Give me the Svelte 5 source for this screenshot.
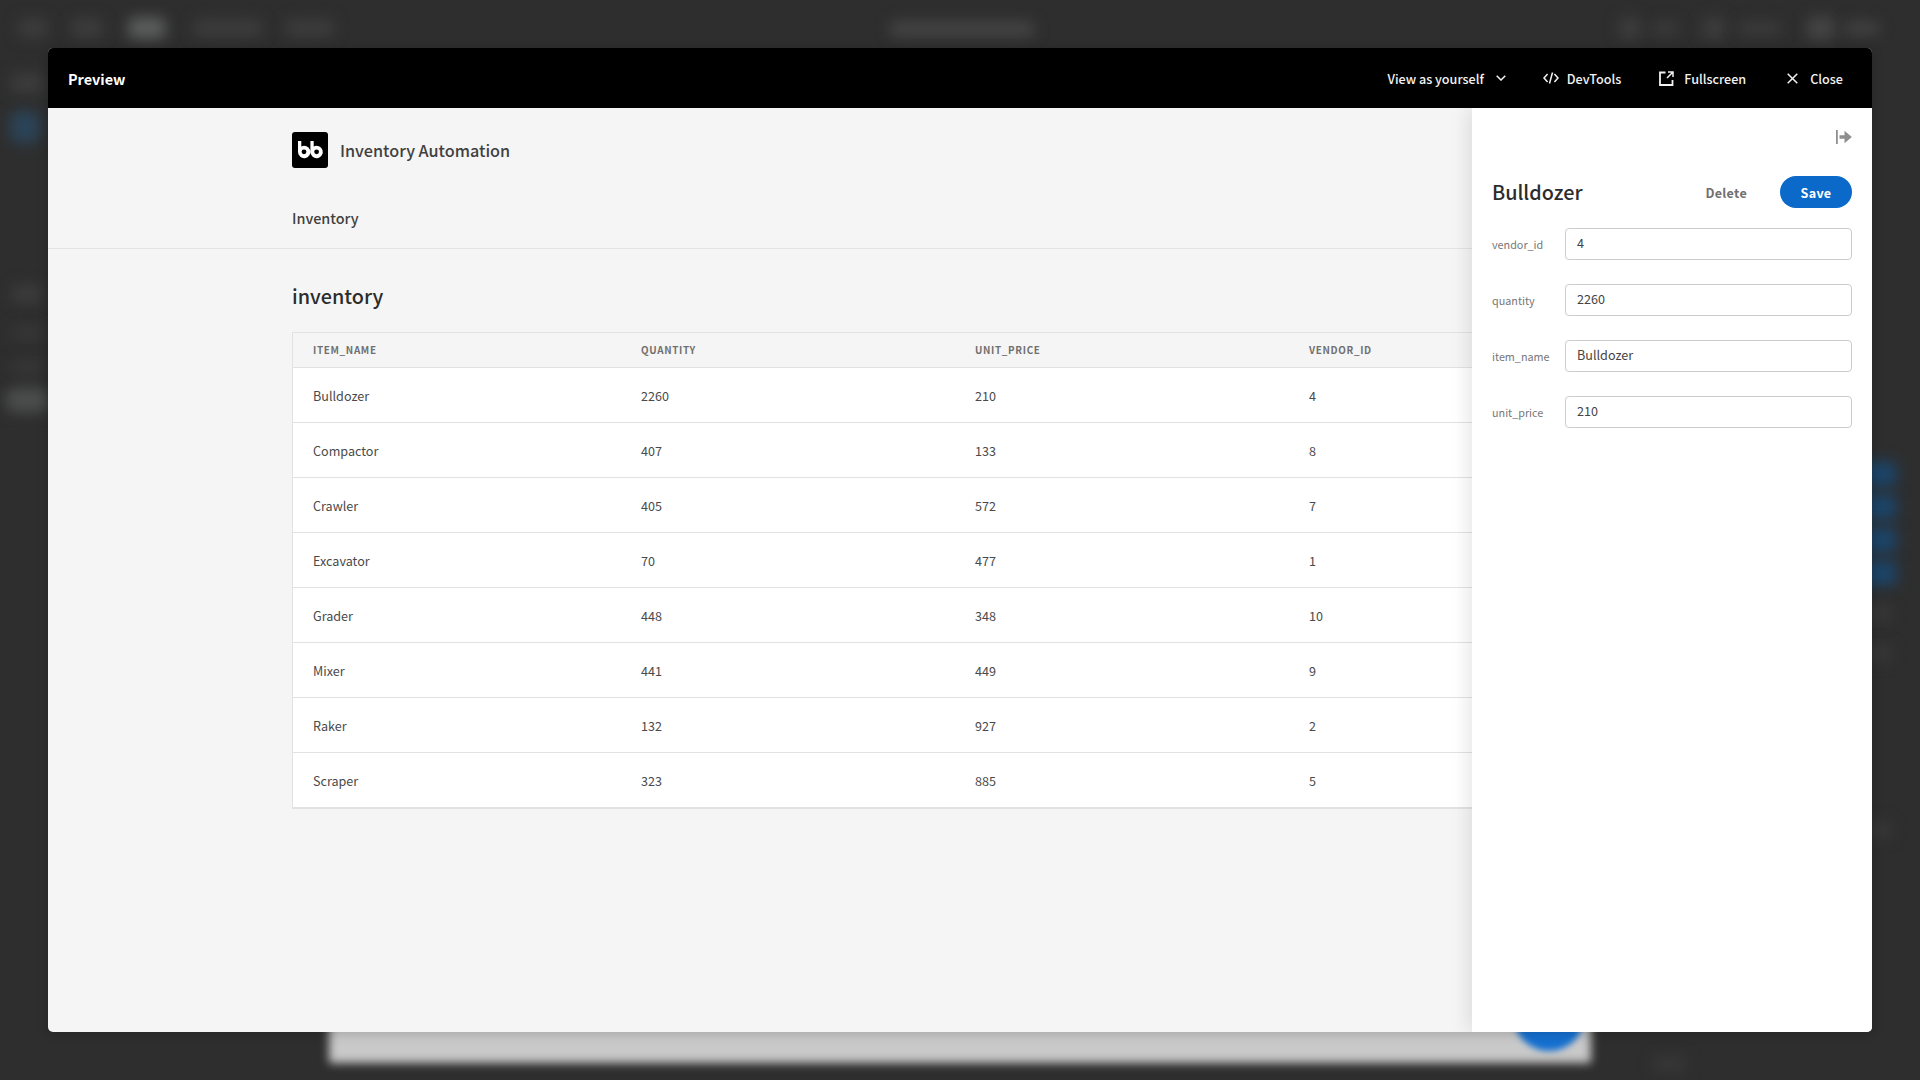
<script>
  const rows = [
    ['Bulldozer', 2260, 210, 4],
    ['Compactor', 407, 133, 8],
    ['Crawler', 405, 572, 7],
    ['Excavator', 70, 477, 1],
    ['Grader', 448, 348, 10],
    ['Mixer', 441, 449, 9],
    ['Raker', 132, 927, 2],
    ['Scraper', 323, 885, 5]
  ];
  const columns = ['item_name', 'quantity', 'unit_price', 'vendor_id'];
  const fields = [['vendor_id', '4'], ['quantity', '2260'], ['item_name', 'Bulldozer'], ['unit_price', '210']];
  const blobs = [
    ['b0', 33, 28, 30, 20], ['b0', 87, 28, 32, 20], ['b3', 147, 28, 38, 22], ['b0', 228, 28, 70, 18], ['b0', 310, 28, 50, 18],
    ['b1', 962, 29, 146, 16],
    ['b0', 1630, 28, 24, 22], ['b0', 1665, 28, 28, 12], ['b0', 1714, 28, 24, 22], ['b0', 1760, 28, 44, 12], ['b1', 1821, 28, 28, 24], ['b1', 1862, 28, 36, 12],
    ['b0', 27, 83, 34, 20], ['dim-blue', 25, 127, 30, 32],
    ['b0', 27, 294, 32, 18], ['b00', 27, 333, 32, 14], ['b00', 27, 367, 32, 14], ['b2', 27, 400, 42, 24],
    ['blue', 1880, 474, 34, 26], ['blue', 1880, 507, 34, 26], ['blue', 1880, 540, 34, 26], ['blue', 1880, 573, 34, 26],
    ['b00', 1880, 613, 24, 18], ['b00', 1880, 653, 24, 18], ['b00', 1880, 830, 24, 18], ['b00', 1670, 1064, 36, 16]
  ];
</script>

<div class="screen">
  <div class="backdrop" aria-hidden="true">
    {#each blobs as [kind, x, y, w, h]}
      <div class="blob {kind}" style="left:{x - w / 2}px;top:{y - h / 2}px;width:{w}px;height:{h}px"></div>
    {/each}
    <div class="canvas"></div>
    <div class="fab"></div>
  </div>

  <div class="modal">
    <header class="modal-bar">
      <strong class="preview">Preview</strong>
      <nav class="actions">
        <button class="action view">
          View as yourself
          <svg class="chev" viewBox="0 0 10 6" width="10" height="6"><path d="M.7.7 5 5 9.300.7" /></svg>
        </button>
        <button class="action dev">
          <svg class="line" viewBox="0 0 16 12" width="16" height="12"><path d="M4.600 2 1 6l3.600 4M11.400 2 15 6l-3.600 4M9.500.5l-3 11" /></svg>
          DevTools
        </button>
        <button class="action full">
          <svg class="line" viewBox="0 0 15 15" width="15" height="15"><path stroke-width="1.800" d="M6.500 1.500H1v12.500h12.500V9" /><path d="M9 1h5v5M14 1 8 7" /></svg>
          Fullscreen
        </button>
        <button class="action close">
          <svg class="line" viewBox="0 0 11 11" width="11" height="11"><path d="m.7.7 9.600 9.600M10.300.7.700 10.300" /></svg>
          Close
        </button>
      </nav>
    </header>

    <div class="body">
      <main class="app">
        <div class="app-top">
          <div class="container">
            <div class="brand">
              <svg class="logo" viewBox="0 0 36 36" width="36" height="36">
                <rect width="36" height="36" rx="3" fill="#000" />
                <path fill="#fff" d="M6 9h3.300v5.500a6.200 6.200 0 1 1-3.300 5.200zM18.400 9h3.300v5.500a6.200 6.200 0 1 1-3.300 5.200z" />
                <circle cx="12" cy="19.800" r="2.400" fill="#000" />
                <circle cx="24.600" cy="19.800" r="2.400" fill="#000" />
              </svg>
              <span class="brand-name">Inventory Automation</span>
            </div>
            <div class="nav-link">Inventory</div>
          </div>
        </div>
        <div class="container content">
          <h1>inventory</h1>
          <div class="table">
            <div class="tr th">
              {#each columns as c}<div class="cell">{c}</div>{/each}
            </div>
            {#each rows as row}
              <div class="tr">
                {#each row as v}<div class="cell">{v}</div>{/each}
              </div>
            {/each}
          </div>
        </div>
      </main>

      <aside class="drawer">
        <div class="collapse">
          <svg viewBox="0 0 16 14" width="16" height="14"><path fill="#8e8e8e" d="M0 0h1.800v14H0zM3.500 5.300h5V.8L15.800 7l-7.300 6.200V8.700h-5z" /></svg>
        </div>
        <div class="drawer-head">
          <h2>Bulldozer</h2>
          <button class="delete">Delete</button>
          <button class="save">Save</button>
        </div>
        <div class="form">
          {#each fields as [label, value]}
            <div class="field">
              <span class="label">{label}</span>
              <div class="input">{value}</div>
            </div>
          {/each}
        </div>
      </aside>
    </div>
  </div>
</div>

<style>
  :global(body) {
    margin: 0;
    background: #2e2e2e;
  }
  .screen {
    position: relative;
    width: 1920px;
    height: 1080px;
    overflow: hidden;
    box-sizing: border-box;
    padding: 48px;
    background: #2e2e2e;
    font-family: "Noto Sans CJK SC", "Noto Sans", sans-serif;
  }
  .backdrop {
    position: absolute;
    inset: 0;
  }
  .blob {
    position: absolute;
    border-radius: 8px;
    filter: blur(7px);
  }
  .b00 { background: #373737; }
  .b0 { background: #3c3c3c; }
  .b1 { background: #444; }
  .b2 { background: #4c4e4d; }
  .b3 { background: #5a5d5b; }
  .blue { background: #1c4468; border-radius: 6px; }
  .dim-blue { background: #2b4458; }
  .canvas {
    position: absolute;
    left: 329px;
    top: 980px;
    width: 1262px;
    height: 83px;
    background: #c9c9c9;
    filter: blur(5px);
  }
  .fab {
    position: absolute;
    left: 1514px;
    top: 985px;
    width: 70px;
    height: 66px;
    border-radius: 50%;
    background: #1570d0;
    filter: blur(3px);
  }
  .modal {
    position: relative;
    height: 984px;
    display: flex;
    flex-direction: column;
    border-radius: 5px;
    overflow: hidden;
    background: #f5f5f5;
    box-shadow: 0 2px 12px rgba(0, 0, 0, 0.18);
  }
  .modal-bar {
    flex: none;
    height: 60px;
    display: flex;
    align-items: center;
    justify-content: space-between;
    padding: 0 29px 0 20px;
    background: #000;
    color: #fff;
  }
  .preview {
    font-size: 14.400px;
    font-weight: 700;
  }
  .actions {
    display: flex;
    align-items: center;
  }
  .action {
    display: flex;
    align-items: center;
    padding: 0;
    border: 0;
    background: none;
    color: #f2f2f2;
    font: 500 12.600px "Noto Sans CJK SC", "Noto Sans", sans-serif;
  }
  .view { gap: 12px; }
  .dev { gap: 8px; margin-left: 37px; }
  .full { gap: 10px; margin-left: 38px; }
  .close { gap: 12px; margin-left: 41px; }
  .chev, .line {
    fill: none;
    stroke: #f2f2f2;
    stroke-width: 1.500;
  }
  .body {
    flex: 1;
    min-height: 0;
    display: flex;
    position: relative;
  }
  .app {
    width: 1424px;
    flex: none;
    overflow: hidden;
  }
  .app-top {
    height: 141px;
    box-sizing: border-box;
    border-bottom: 1px solid #e4e4e4;
  }
  .container {
    width: 1336px;
    margin-left: 244px;
  }
  .brand {
    display: flex;
    align-items: center;
    gap: 12px;
    padding-top: 24px;
  }
  .logo { display: block; }
  .brand-name {
    font-size: 16.200px;
    font-weight: 500;
    color: #404040;
  }
  .nav-link {
    margin-top: 38px;
    font-size: 14.400px;
    font-weight: 500;
    line-height: 24px;
    color: #404040;
  }
  .content {
    padding-top: 31px;
  }
  h1 {
    margin: 0 0 20px;
    font-size: 19.800px;
    font-weight: 500;
    line-height: 32px;
    color: #2c2c2c;
  }
  .table {
    border: 1px solid #e2e2e2;
    border-bottom-width: 2px;
    background: #fff;
  }
  .tr {
    display: grid;
    grid-template-columns: 328px 334px 334px 334px;
    align-items: center;
    height: 55px;
    box-sizing: border-box;
    padding-left: 20px;
    border-top: 1px solid #e2e2e2;
    font-size: 12.600px;
    color: #4a4a4a;
  }
  .tr:nth-child(2) { border-top: 0; height: 54px; }
  .th {
    height: 35px;
    border-top: 0;
    border-bottom: 1px solid #e2e2e2;
    background: #f5f5f5;
    font-size: 9.900px;
    font-weight: 700;
    letter-spacing: 0.660px;
    text-transform: uppercase;
    color: #707070;
  }
  .drawer {
    position: absolute;
    right: 0;
    top: 0;
    bottom: 0;
    width: 400px;
    box-sizing: border-box;
    padding: 0 20px;
    background: #fff;
    box-shadow: -4px 0 18px rgba(0, 0, 0, 0.1);
  }
  .collapse {
    display: flex;
    justify-content: flex-end;
    padding-top: 22px;
    height: 14px;
  }
  .drawer-head {
    display: flex;
    align-items: center;
    margin-top: 32px;
    height: 32px;
  }
  h2 {
    flex: 1;
    margin: 0;
    font-size: 19.800px;
    font-weight: 500;
    line-height: 30px;
    color: #2c2c2c;
  }
  .delete, .save {
    border: 0;
    padding: 0;
    background: none;
    font: 700 12.600px "Noto Sans CJK SC", "Noto Sans", sans-serif;
    letter-spacing: 0.3px;
  }
  .delete {
    margin-right: 33px;
    color: #707070;
  }
  .save {
    width: 72px;
    height: 32px;
    border-radius: 16px;
    background: #0a69c9;
    color: #fff;
  }
  .form {
    display: flex;
    flex-direction: column;
    gap: 24px;
    margin-top: 20px;
  }
  .field {
    display: grid;
    grid-template-columns: 73px 1fr;
    align-items: center;
  }
  .label {
    font-size: 10.800px;
    color: #777;
  }
  .input {
    height: 32px;
    box-sizing: border-box;
    padding: 0 11px;
    border: 1px solid #ccc;
    border-radius: 4px;
    font-size: 12.600px;
    line-height: 28px;
    color: #444;
  }
</style>
